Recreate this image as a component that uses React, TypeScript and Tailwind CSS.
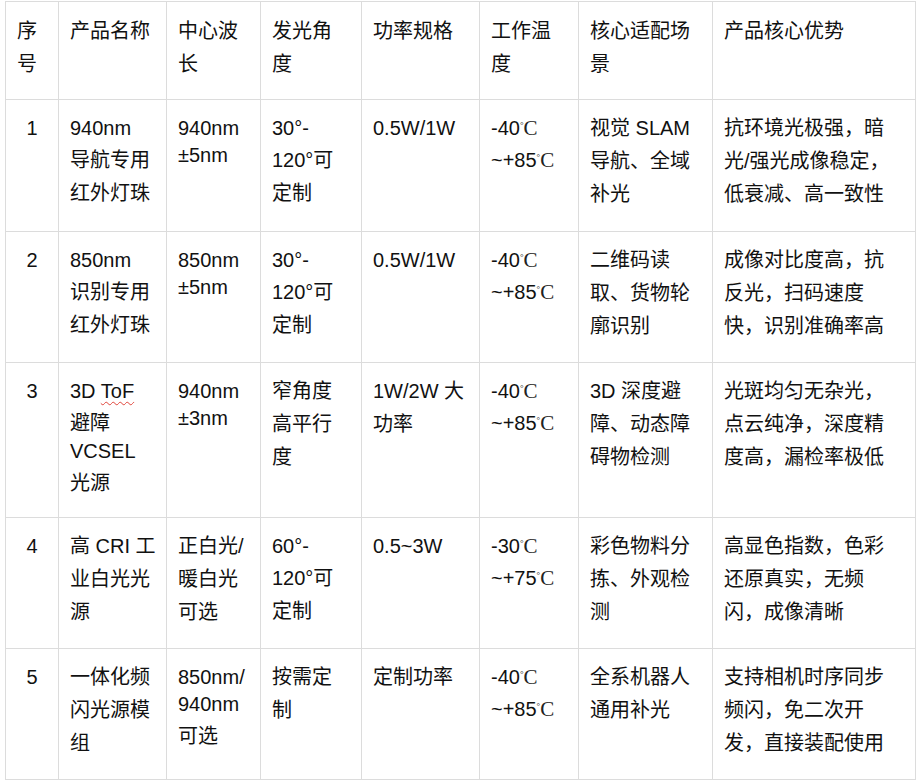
import React from 'react';

type Cell = React.ReactNode[];

// ℃ drawn as a tiny degree ring plus a serif C, like the source page's font
const C = () => (
  <span className="font-['Liberation_Serif',serif] text-[#222]">
    <span className="relative -top-[7px] text-[9px]">°</span>
    <span className="text-[21px] font-light">C</span>
  </span>
);

const temp = (a: string, b: string): Cell => [
  <span className="inline-block py-[1.5px]">{a}<C /></span>,
  <span className="inline-block py-[1.5px]">{b}<C /></span>,
];

const headers: Cell[] = [
  ['序', '号'],
  ['产品名称'],
  ['中心波', '长'],
  ['发光角', '度'],
  ['功率规格'],
  ['工作温', '度'],
  ['核心适配场', '景'],
  ['产品核心优势'],
];

const rows: { no: string; h: string; cells: Cell[] }[] = [
  {
    no: '1',
    h: 'h-[132px]',
    cells: [
      ['940nm', '导航专用', '红外灯珠'],
      ['940nm', '±5nm'],
      ['30°-', '120°可', '定制'],
      ['0.5W/1W'],
      temp('-40', '~+85'),
      ['视觉 SLAM', '导航、全域', '补光'],
      ['抗环境光极强，暗', '光/强光成像稳定，', '低衰减、高一致性'],
    ],
  },
  {
    no: '2',
    h: 'h-[131px]',
    cells: [
      ['850nm', '识别专用', '红外灯珠'],
      ['850nm', '±5nm'],
      ['30°-', '120°可', '定制'],
      ['0.5W/1W'],
      temp('-40', '~+85'),
      ['二维码读', '取、货物轮', '廓识别'],
      ['成像对比度高，抗', '反光，扫码速度', '快，识别准确率高'],
    ],
  },
  {
    no: '3',
    h: 'h-[155px]',
    cells: [
      [
        <>
          3D{' '}
          <span className="underline decoration-wavy decoration-[#e0453b] decoration-1 underline-offset-[3px]">ToF</span>
        </>,
        '避障',
        'VCSEL',
        '光源',
      ],
      ['940nm', '±3nm'],
      ['窄角度', '高平行', '度'],
      ['1W/2W 大', '功率'],
      temp('-40', '~+85'),
      ['3D 深度避', '障、动态障', '碍物检测'],
      ['光斑均匀无杂光，', '点云纯净，深度精', '度高，漏检率极低'],
    ],
  },
  {
    no: '4',
    h: 'h-[131px]',
    cells: [
      ['高 CRI 工', '业白光光', '源'],
      ['正白光/', '暖白光', '可选'],
      ['60°-', '120°可', '定制'],
      ['0.5~3W'],
      temp('-30', '~+75'),
      ['彩色物料分', '拣、外观检', '测'],
      ['高显色指数，色彩', '还原真实，无频', '闪，成像清晰'],
    ],
  },
  {
    no: '5',
    h: 'h-[131px]',
    cells: [
      ['一体化频', '闪光源模', '组'],
      ['850nm/', '940nm', '可选'],
      ['按需定', '制'],
      ['定制功率'],
      temp('-40', '~+85'),
      ['全系机器人', '通用补光'],
      ['支持相机时序同步', '频闪，免二次开', '发，直接装配使用'],
    ],
  },
];

const widths = ['w-[53px]', 'w-[108px]', 'w-[94px]', 'w-[101px]', 'w-[118px]', 'w-[99px]', 'w-[134px]', 'w-[203px]'];

const Lines = ({ lines }: { lines: Cell }) => (
  <>
    {lines.map((l, i) => (
      <div key={i} className="py-[2px] whitespace-nowrap">
        {l}
      </div>
    ))}
  </>
);

const App: React.FC = () => {
  return (
    <div className="min-h-screen bg-white pt-[1px] pl-[5px] text-[20px] leading-[normal] text-[#111] font-['Liberation_Sans','Noto_Sans_CJK_SC',sans-serif]">
      <table className="w-[911px] table-fixed border-separate border-spacing-0 border-l border-t border-[#dcdcdc]">
        <thead>
          <tr className="h-[98px]">
            {headers.map((h, i) => (
              <th
                key={i}
                className={`${widths[i]} border-r border-b border-[#dcdcdc] px-[11px] pt-[11px] text-left font-normal align-baseline`}
              >
                <Lines lines={h} />
              </th>
            ))}
          </tr>
        </thead>
        <tbody>
          {rows.map((r) => (
            <tr key={r.no} className={r.h}>
              <td className="border-r border-b border-[#dcdcdc] pt-[10px] text-center align-baseline">
                <Lines lines={[r.no]} />
              </td>
              {r.cells.map((c, i) => (
                <td key={i} className="border-r border-b border-[#dcdcdc] px-[11px] pt-[10px] align-baseline">
                  <Lines lines={c} />
                </td>
              ))}
            </tr>
          ))}
        </tbody>
      </table>
    </div>
  );
};

export default App;
